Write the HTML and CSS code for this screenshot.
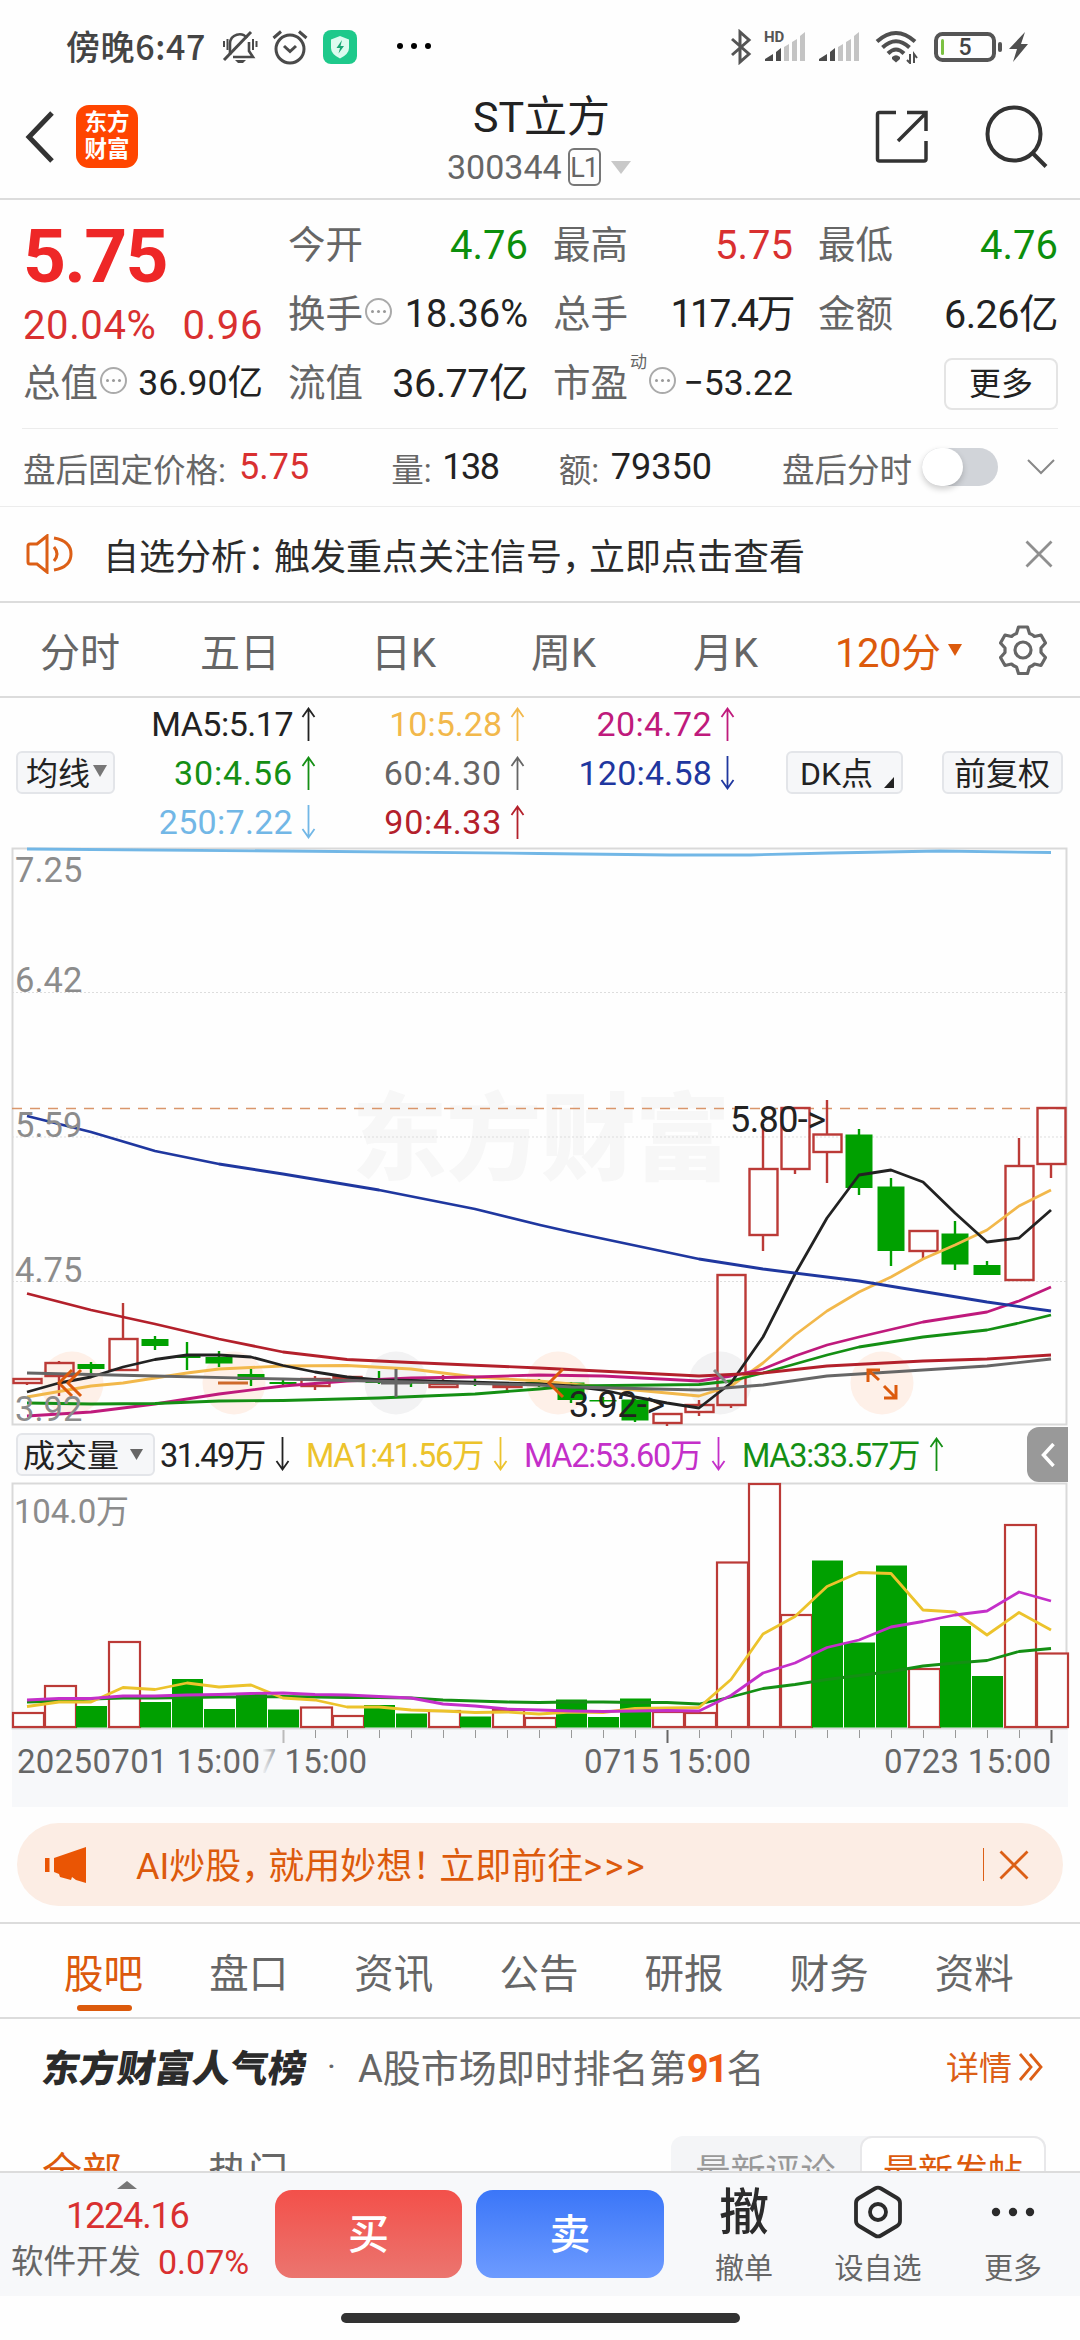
FILE: index.html
```html
<!DOCTYPE html>
<html lang="zh-CN">
<head>
    <meta charset="utf-8">
    <title>ST立方 300344</title>
    <link rel="stylesheet" href="styles.css">
</head>
<body>

<!-- status bar -->
<div class="status">
    <span class="status-time">傍晚6:47</span>
    <svg class="ic-bell" width="36" height="36" viewBox="0 0 36 36" fill="none" stroke="#4a4a4a" stroke-width="2.6">
        <path d="M8 26 V14 a9.500 9.500 0 0 1 17-5 M11 28 H31 L27 22 V13"/>
        <path d="M2 31 L29 3" stroke-width="3"/>
        <path d="M2 12v6M5.500 10v11M31 10v11M34.500 12v6" stroke-width="2"/>
        <path d="M13 31 h11 l-3 3 h-5z" fill="#4a4a4a" stroke="none"/>
    </svg>
    <svg class="ic-alarm" width="36" height="36" viewBox="0 0 36 36" fill="none" stroke="#4a4a4a" stroke-width="3">
        <circle cx="18" cy="20" r="14"/>
        <path d="M12 17 l6 5.500 6-5.500M1.500 9 L9 2.500M34.500 9 L27 2.500"/>
    </svg>
    <svg class="ic-shield" width="34" height="34" viewBox="0 0 34 34">
        <rect width="34" height="34" rx="8" fill="#1ec98b"/>
        <path d="M17 6 L26 9.500 V18 q0 6-9 10.500 q-9-4.500-9-10.500 V9.500z" fill="#dcfbef"/>
        <path d="M19 10 L13.500 18 h3.500 l-1.500 5.500 L21 16 h-3.500z" fill="#17a673"/>
    </svg>
    <svg class="ic-dots" width="36" height="8" viewBox="0 0 36 8"><circle cx="3" cy="4" r="3"/><circle cx="17" cy="4" r="3"/><circle cx="31" cy="4" r="3"/></svg>

    <svg class="ic-bt" width="22" height="36" viewBox="0 0 22 36" fill="none" stroke="#555" stroke-width="3">
        <path d="M2 10 L19 25 L10 33 V3 L19 11 L2 26"/>
    </svg>
    <svg class="ic-signal" width="42" height="34" viewBox="0 0 42 34">
        <path d="M0 31v-2l8-5v7zM11 31v-9l5-4v13z" fill="#4a4a4a"/>
        <path d="M19 31V17l5-3v17zM27 31V12l5-3v22zM35 31V6l5-4v29z" fill="#c4c4c4"/>
        <text x="-1" y="12" class="hd">HD</text>
    </svg>
    <svg class="ic-signal2" width="42" height="34" viewBox="0 0 42 34">
        <path d="M0 31v-2l8-5v7zM11 31v-9l5-4v13z" fill="#4a4a4a"/>
        <path d="M19 31V17l5-3v17zM27 31V12l5-3v22zM35 31V6l5-4v29z" fill="#c4c4c4"/>
    </svg>
    <svg class="ic-wifi" width="44" height="34" viewBox="0 0 44 34" fill="none" stroke="#4f4f4f" stroke-width="4">
        <path d="M2 11.500 Q21 -5.500 40 11.500M7.500 17.500 Q21 5 34.500 17.500M13 23.500 Q21 15.500 29 23.500"/>
        <path d="M17 27 q4-3.500 8 0 v2 l-4 3.500 -4-3.500z" fill="#4f4f4f" stroke="none"/>
        <path d="M35 24v9l-3-3M39 33v-9l3 4" stroke-width="2"/>
    </svg>
    <svg class="ic-battery" width="70" height="32" viewBox="0 0 70 32">
        <rect x="2" y="3" width="58" height="26" rx="6.500" fill="none" stroke="#555" stroke-width="4"/>
        <rect x="64" y="11" width="4" height="10" rx="2" fill="#555"/>
        <rect x="7" y="8" width="3" height="16" rx="1.500" fill="#7cc142"/>
        <text x="31" y="24" class="battery-num">5</text>
    </svg>
    <svg class="ic-bolt" width="20" height="30" viewBox="0 0 20 30"><path d="M16 0 L0 17 h8 L4 30 L19 12 h-7z" fill="#4f4f4f"/></svg>
</div>

<!-- header -->
<div class="header">
    <svg class="ic-back" width="30" height="52" viewBox="0 0 30 52" fill="none" stroke="#333" stroke-width="5"><path d="M27 2 L4 26 L27 50"/></svg>
    <div class="logo"><span>东方</span><span>财富</span></div>
    <div class="title">
        <h1>ST立方</h1>
        <div class="code">300344<span class="level">L1</span><svg width="20" height="13" viewBox="0 0 20 13"><path d="M0 0h20l-10 13z" fill="#c8c8c8"/></svg></div>
    </div>
    <svg class="ic-share" width="54" height="54" viewBox="0 0 54 54" fill="none" stroke="#333" stroke-width="3.500">
        <path d="M21 2.500 H4.500 q-2 0-2 2 V49 q0 2 2 2 H49 q2 0 2-2 V31M32 2.500 H51 V21M23 31 L51 3"/>
    </svg>
    <svg class="ic-search" width="64" height="64" viewBox="0 0 64 64" fill="none" stroke="#333" stroke-width="4">
        <circle cx="29" cy="29" r="26.500"/><path d="M47.500 48 L61 61.500"/>
    </svg>
</div>

<!-- quote -->
<div class="quote">
    <div class="price">
        <div class="last">5.75</div>
        <div class="change"><span>20.04%</span><span>0.96</span></div>
    </div>
    <div class="cell"><label>今开</label><b class="green">4.76</b></div>
    <div class="cell"><label>最高</label><b class="red">5.75</b></div>
    <div class="cell"><label>最低</label><b class="green">4.76</b></div>
    <div class="cell"><label>换手<i class="info"></i></label><b class="w-rate">18.36%</b></div>
    <div class="cell"><label>总手</label><b class="w-vol">117.4万</b></div>
    <div class="cell"><label>金额</label><b class="w-unit">6.26亿</b></div>
    <div class="cell"><label>总值<i class="info"></i></label><b class="small">36.90亿</b></div>
    <div class="cell"><label>流值</label><b class="w-unit">36.77亿</b></div>
    <div class="cell"><label>市盈<sup>动</sup><i class="info"></i></label><b class="small">−53.22</b></div>
    <div class="cell"><span class="more">更多</span></div>
</div>
<div class="after">
    <label class="a1">盘后固定价格:</label><b class="red">5.75</b>
    <label class="a2">量:</label><b class="qty">138</b>
    <label class="a3">额:</label><b>79350</b>
    <label class="a4">盘后分时</label><span class="toggle"></span>
    <svg width="28" height="16" viewBox="0 0 28 16" fill="none" stroke="#888" stroke-width="2"><path d="M1 1 L14 14 L27 1"/></svg>
</div>

<!-- notice -->
<div class="notice">
    <svg width="48" height="40" viewBox="0 0 48 40" fill="none" stroke="#dc5f16" stroke-width="3">
        <path d="M21 2 L11 10 H4 q-2 0-2 2 V28 q0 2 2 2 H11 L21 38zM28 13 q6 7 0 14M28 4 q17 3 17 16 t-17 16"/>
    </svg>
    <p>自选分析<i>：</i>触发重点关注信号<i>，</i>立即点击查看</p>
    <svg width="28" height="28" viewBox="0 0 28 28" fill="none" stroke="#8f8f8f" stroke-width="2.800"><path d="M1.500 1.500 L26.500 26.500M26.500 1.500 L1.500 26.500"/></svg>
</div>

<!-- period tabs -->
<div class="periods">
    <span>分时</span><span>五日</span><span>日K</span><span>周K</span><span>月K</span>
    <span class="on">120分<svg width="14" height="12" viewBox="0 0 14 12"><path d="M0 0h14l-7 12z" fill="#dc5a0c"/></svg></span>
    <svg class="gear" width="48" height="50" viewBox="0 0 48 50" fill="none" stroke="#666" stroke-width="3.200">
        <path d="M19.500 2 h9 l2 6.500 q3 1 5 3 l6.500-1.500 4.500 8 -4.500 5 v4.500 l4.500 5 -4.500 8 -6.500-1.500 q-2 2-5 3 l-2 6.500 h-9 l-2-6.500 q-3-1-5-3 l-6.500 1.500 -4.500-8 4.500-5 v-4.500 l-4.500-5 4.500-8 6.500 1.500 q2-2 5-3z" stroke-linejoin="round"/>
        <circle cx="24" cy="25" r="8"/>
    </svg>
</div>

<svg width="0" height="0" class="defs">
    <symbol id="up" viewBox="0 0 15 34"><path d="M7.500 34V2M1.500 10 L7.500 1.500 L13.500 10" fill="none" stroke="currentColor" stroke-width="1.800"/></symbol>
    <symbol id="down" viewBox="0 0 15 34"><path d="M7.500 0V32M1.500 24 L7.500 32.500 L13.500 24" fill="none" stroke="currentColor" stroke-width="1.800"/></symbol>
</svg>

<!-- moving averages -->
<div class="averages">
    <span class="btn btn-ma">均线<svg width="14" height="12" viewBox="0 0 14 12"><path d="M0 0h14l-7 12z" fill="#777"/></svg></span>
    <div class="ma-grid">
        <span class="c5">MA5:5.17<svg><use href="#up"/></svg></span>
        <span class="c10">10:5.28<svg><use href="#up"/></svg></span>
        <span class="c20">20:4.72<svg><use href="#up"/></svg></span>
        <span class="c30">30:4.56<svg><use href="#up"/></svg></span>
        <span class="c60">60:4.30<svg><use href="#up"/></svg></span>
        <span class="c120">120:4.58<svg><use href="#down"/></svg></span>
        <span class="c250">250:7.22<svg><use href="#down"/></svg></span>
        <span class="c90">90:4.33<svg><use href="#up"/></svg></span>
    </div>
    <span class="btn btn-dk">DK点<svg width="10" height="11" viewBox="0 0 10 11"><path d="M10 0v11H0z" fill="#222"/></svg></span>
    <span class="btn btn-fq">前复权</span>
</div>

<!-- candles -->
<svg class="kline" width="1080" height="580" viewBox="0 848 1080 580">
    <text class="watermark" x="352" y="1174" textLength="378">东方财富</text>
    <path class="grid" d="M12 993.500H1067M12 1138H1067M12 1282.500H1067"/>
    <rect class="frame" x="12.500" y="849.500" width="1054" height="576"/>
    <g id="events"></g>
    <path d="M12 1109.500H1067" stroke="#d9966b" stroke-width="1.500" stroke-dasharray="10 8"/>
    <g id="candles"></g>
    <g id="averages"></g>
    <g class="event-icons">
        <path d="M72 1371 L59 1384 L72 1397M81 1371 L68 1384 L81 1397" stroke="#dc5a0c"/>
        <path d="M218 1384H248" stroke="#cf6a2c"/>
        <path d="M381 1384H411M396 1370V1398" stroke="#666"/>
        <path d="M563 1370 L549 1384 L563 1398" stroke="#dc5a0c"/>
        <path d="M714 1371 L727 1384" stroke="#888"/>
        <path d="M879 1381 L868 1371M868 1383V1371H880M884 1387 L896 1399M896 1386V1399H884" stroke="#dc5a0c" stroke-width="3.500"/>
    </g>
    <g class="axis">
        <text x="15" y="883">7.25</text>
        <text x="15" y="993">6.42</text>
        <text x="15" y="1138">5.59</text>
        <text x="15" y="1283">4.75</text>
        <text x="15" y="1422">3.92</text>
    </g>
    <text class="mark" x="730" y="1133" textLength="96">5.80-&gt;</text>
    <text class="mark" x="569" y="1418" textLength="96">3.92-&gt;</text>
</svg>

<!-- volume -->
<div class="vol-head">
    <span class="btn btn-vol">成交量<svg width="13" height="11" viewBox="0 0 13 11"><path d="M0 0h13l-6.500 11z" fill="#666"/></svg></span>
    <span class="v0">31.49万<svg><use href="#down"/></svg></span>
    <span class="v1">MA1:41.56万<svg><use href="#down"/></svg></span>
    <span class="v2">MA2:53.60万<svg><use href="#down"/></svg></span>
    <span class="v3">MA3:33.57万<svg><use href="#up"/></svg></span>
    <span class="side"><svg width="14" height="24" viewBox="0 0 14 24" fill="none" stroke="#fff" stroke-width="3.500"><path d="M12.500 1 L2.500 12 L12.500 23"/></svg></span>
</div>
<svg class="volume" width="1080" height="325" viewBox="0 1483 1080 325">
    <defs>
        <linearGradient id="fade"><stop offset="0" stop-color="#f7f8fa"/><stop offset="1" stop-color="#f7f8fa" stop-opacity="0"/></linearGradient>
    </defs>
    <rect x="12" y="1730" width="1056" height="78" fill="#f7f8fa"/>
    <rect class="frame" x="12.500" y="1484.500" width="1054" height="245"/>
    <text class="vol-max" x="14" y="1524" textLength="115">104.0万</text>
    <g id="bars"></g>
    <g id="vol-averages"></g>
    <g id="ticks"></g>
    <g class="dates">
        <text x="202" y="1774" textLength="165">0707 15:00</text>
        <rect x="196" y="1745" width="67" height="36" fill="#f7f8fa"/>
        <rect x="262" y="1745" width="22" height="36" fill="url(#fade)"/>
        <text x="17" y="1774" textLength="243">20250701 15:00</text>
        <text x="584" y="1774" textLength="167">0715 15:00</text>
        <text x="884" y="1774" textLength="167">0723 15:00</text>
    </g>
</svg>

<!-- promo -->
<div class="promo">
    <svg class="horn" width="42" height="38" viewBox="0 0 42 38" fill="#ea5504"><path d="M0 12h4.500v14H0zM9 12 L41 1V37L31 34 27 31 26 34 15 31 14 28 9 26z"/></svg>
    <p>AI炒股<i>，</i>就用妙想<i>！</i>立即前往<em>&gt;&gt;&gt;</em></p>
    <span class="bar"></span>
    <svg width="30" height="30" viewBox="0 0 30 30" fill="none" stroke="#dc5f16" stroke-width="2.800"><path d="M1.500 1.500 L28.500 28.500M28.500 1.500 L1.500 28.500"/></svg>
</div>

<div class="sections">
    <span class="on">股吧</span><span>盘口</span><span>资讯</span><span>公告</span><span>研报</span><span>财务</span><span>资料</span>
</div>

<div class="rank">
    <strong>东方财富人气榜</strong><em>·</em>
    <p>A股市场即时排名第<b>91</b>名</p>
    <a>详情<svg width="26" height="28" viewBox="0 0 26 28" fill="none" stroke="#dc5f16" stroke-width="2.800"><path d="M2 1 L13 14 L2 27M12 1 L23 14 L12 27"/></svg></a>
</div>

<div class="filter">
    <div class="filter-in">
        <span class="all">全部</span><span class="hot">热门</span>
        <div class="seg"><span>最新评论</span><span class="on">最新发帖</span></div>
    </div>
</div>

<!-- bottom bar -->
<div class="bottom">
    <div class="index">
        <svg width="20" height="8" viewBox="0 0 20 8"><path d="M10 0 L20 8H0z" fill="#777"/></svg>
        <div class="point">1224.16</div>
        <div class="board"><span>软件开发</span><b>0.07%</b></div>
    </div>
    <div class="trade buy">买</div>
    <div class="trade sell">卖</div>
    <div class="tool t1"><span class="big">撤</span><span>撤单</span></div>
    <div class="tool t2">
        <span class="big"><svg width="48" height="54" viewBox="0 0 48 54" fill="none" stroke="#2b2b2b" stroke-width="3.800"><path d="M21 3.500 q3-1.800 6 0 L43 13 q3 1.800 3 5 V36 q0 3.200-3 5 L27 50.500 q-3 1.800-6 0 L5 41 q-3-1.800-3-5 V18 q0-3.200 3-5z"/><circle cx="24" cy="27" r="8"/></svg></span>
        <span>设自选</span>
    </div>
    <div class="tool t3">
        <span class="big"><svg width="44" height="10" viewBox="0 0 44 10" fill="#2b2b2b"><circle cx="5" cy="5" r="4.200"/><circle cx="22" cy="5" r="4.200"/><circle cx="39" cy="5" r="4.200"/></svg></span>
        <span>更多</span>
    </div>
</div>
<div class="home"><span></span></div>

<script src="chart.js"></script>
</body>
</html>
```

FILE: styles.css
```css
* {
    box-sizing: border-box;
    margin: 0;
    padding: 0;
}

body {
    width: 1080px;
    height: 2340px;
    overflow: hidden;
    background: #fefefe;
    color: #222;
    font-family: Roboto, "Noto Sans CJK SC", sans-serif;
}

svg { display: block; flex: none; }
i, em { font-style: normal; }
b { font-weight: normal; }
.defs { position: absolute; }

/* status bar */
.status {
    display: flex;
    align-items: center;
    height: 72px;
    padding: 22px 0 0 66px;
    white-space: nowrap;
}
.status-time {
    width: 156px;
    font: 500 34px/46px "Noto Sans CJK SC", sans-serif;
    letter-spacing: 0.6px;
    color: #444;
    padding-bottom: 3px;
}
.ic-alarm { margin-left: 14px; }
.ic-shield { margin-left: 15px; }
.ic-dots { margin-left: 40px; margin-top: -2px; }
.ic-bt { margin-left: 297px; }
.ic-signal { margin-left: 13px; overflow: visible; }
.ic-signal2 { margin-left: 12px; }
.ic-wifi { margin-left: 14px; }
.ic-battery { margin-left: 15px; }
.ic-bolt { margin-left: 5px; }
.hd { font: bold 15px Roboto; fill: #555; stroke: #fefefe; stroke-width: 2px; paint-order: stroke; }
.battery-num { font: 500 23px Roboto; fill: #444; text-anchor: middle; }

/* header */
.header {
    display: flex;
    height: 128px;
    padding-left: 25px;
    border-bottom: 2px solid #dcdcdc;
}
.ic-back { margin-top: 39px; }
.logo {
    width: 62px;
    height: 63px;
    margin: 33px 0 0 21px;
    padding-top: 4px;
    border-radius: 13px;
    background: #ff4500;
    color: #fff;
    font-size: 22.5px;
    font-weight: bold;
    line-height: 27px;
    text-align: center;
}
.logo span { display: block; }
.title {
    width: 300px;
    margin-left: 255px;
}
.title h1 {
    width: 297px;
    font: normal 43px/56px Roboto, "Noto Sans CJK SC", sans-serif;
    padding-top: 17px;
    text-align: center;
    height: 74px;
}
.code {
    display: flex;
    align-items: center;
    height: 42px;
    padding-left: 54px;
    font-size: 34px;
    color: #666;
}
.level {
    width: 33px;
    height: 38px;
    margin: 0 10px 0 6px;
    border: 2px solid #777;
    border-radius: 6px;
    font-size: 27px;
    line-height: 36px;
    text-align: center;
    letter-spacing: -1px;
}
.ic-share { margin: 38px 0 0 182px; }
.ic-search { margin: 33px 0 0 56px; }

/* quote */
.quote {
    display: grid;
    grid-template-columns: repeat(4, 240px);
    grid-template-rows: repeat(3, 69px);
    column-gap: 25px;
    margin: 11px 22px 0;
    padding: 0 0 0 1px;
    height: 217px;
}
.price { grid-row: span 2; color: #d93030; }
.last {
    height: 86px;
    font-size: 75px;
    font-weight: bold;
    line-height: 91px;
    color: #ee2727;
    letter-spacing: -1.8px;
}
.change {
    display: flex;
    justify-content: space-between;
    font-size: 40px;
    line-height: 58px;
    height: 52px;
    letter-spacing: 0.6px;
}
.cell {
    display: flex;
    align-items: center;
    justify-content: space-between;
    line-height: 69px;
    white-space: nowrap;
}
.cell label {
    display: flex;
    align-items: center;
    font-size: 37.5px;
    color: #666;
}
.cell b { font-size: 40px; }
.cell b.small { font-size: 35.5px; }
.cell b.w-rate { font-size: 38px; }
.cell b.w-vol { font-size: 39px; letter-spacing: -2.4px; }
.cell b.w-unit { font-size: 39.5px; letter-spacing: -0.5px; }
.cell sup { font-size: 17px; align-self: flex-start; line-height: 26px; margin-left: 2px; }
.info {
    position: relative;
    width: 27px;
    height: 27px;
    margin: -6px 0 0 2px;
    border: 2px solid #aaa;
    border-radius: 50%;
}
.info::after {
    content: "";
    position: absolute;
    left: 4px;
    top: 10px;
    width: 3px;
    height: 3px;
    border-radius: 50%;
    background: #999;
    box-shadow: 6px 0 #999, 12px 0 #999;
}
.red, .cell .red { color: #d93030; }
.green, .cell .green { color: #0c8f0c; }
.more {
    width: 114px;
    height: 52px;
    margin-left: auto;
    border: 2px solid #e4e4e4;
    border-radius: 8px;
    font-size: 32px;
    line-height: 48px;
    text-align: center;
}
.after {
    display: flex;
    align-items: center;
    height: 79px;
    padding: 0 25px 0 23px;
    border-bottom: 1px solid #ececec;
    background: linear-gradient(#ececec, #ececec) 22px 0 / 1036px 1px no-repeat;
    font-size: 36px;
    white-space: nowrap;
}
.after label { font-size: 32.5px; color: #666; flex: none; }
.after .a1 { width: 216px; }
.after .a2 { width: 51px; margin-left: 82px; }
.after .a3 { width: 52px; margin-left: 60px; }
.after .a4 { width: 130px; margin-left: auto; }
.after .qty { letter-spacing: -1.4px; }
.toggle {
    width: 76px;
    height: 38px;
    margin: 0 29px 0 10px;
    border-radius: 19px;
    background: #d1d4d9;
}
.toggle::after {
    content: "";
    display: block;
    width: 41px;
    height: 38px;
    border-radius: 19px;
    background: #fff;
    box-shadow: 0 3px 6px rgba(0, 0, 0, .2);
}

/* notice */
.notice {
    display: flex;
    align-items: center;
    height: 96px;
    padding: 0 27px 0 26px;
    border-bottom: 2px solid #dcdcdc;
}
.notice p { flex: 1; margin-left: 29px; font-size: 36px; color: #2b2b2b; white-space: nowrap; }
.notice i { letter-spacing: -9px; }

/* period tabs */
.periods {
    display: flex;
    align-items: center;
    height: 95px;
    padding-left: 40px;
    border-bottom: 2px solid #dcdcdc;
    font-size: 40px;
    color: #666;
    white-space: nowrap;
}
.periods span { width: 160px; }
.periods span:nth-child(2) { width: 171px; }
.periods span:nth-child(3) { width: 160px; }
.periods span:nth-child(4) { width: 162px; }
.periods span:nth-child(5) { width: 142px; }
.periods .on { display: flex; align-items: center; width: 164px; color: #dc5a0c; letter-spacing: -0.5px; }
.periods .on svg { margin-left: 8px; }

/* moving averages */
.averages {
    display: flex;
    align-items: center;
    height: 149px;
    padding-left: 16px;
}
.btn {
    display: flex;
    align-items: center;
    height: 43px;
    padding-bottom: 3px;
    border: 2px solid #e3e5e9;
    border-radius: 6px;
    background: #f6f7f9;
    color: #222;
    font-size: 32px;
    white-space: nowrap;
    flex: none;
}
.btn-ma { width: 99px; padding-left: 8px; }
.btn-ma svg { margin-left: 3px; }
.btn-dk { width: 117px; margin-left: 51px; padding-left: 12px; }
.btn-dk svg { margin: 22px 0 0 11px; }
.btn-fq { width: 121px; margin-left: 39px; padding-left: 10px; }
.ma-grid {
    display: grid;
    grid-template: repeat(3, 49px) / 201px 209px 210px;
    font-size: 34px;
}
.ma-grid span { display: flex; align-items: center; justify-content: flex-end; }
.ma-grid svg { width: 15px; height: 34px; margin-left: 8px; }
.c5 { color: #222; letter-spacing: -0.5px; }
.c10 { color: #f2b84b; }
.c20 { color: #bf1a7c; letter-spacing: 0.4px; }
.c30 { color: #148f14; letter-spacing: 0.9px; }
.c60 { color: #666; letter-spacing: 0.8px; }
.c120 { color: #1f379f; letter-spacing: 0.2px; }
.c250 { color: #72b7e6; letter-spacing: 0.3px; }
.c90 { color: #b3202b; letter-spacing: 0.7px; }

/* candles */
.frame { fill: none; stroke: #d9d9d9; stroke-width: 2; }
.grid { stroke: #ddd; stroke-dasharray: 2 2; }
.watermark { font: 900 95px "Noto Sans CJK SC", sans-serif; fill: #f7f7f7; }
.axis { font-size: 34.5px; fill: #8c8c8c; }
.mark { font-size: 36px; fill: #222; }
.event-icons path { fill: none; stroke-width: 3; }
.line { fill: none; stroke-width: 2.8; stroke-linejoin: round; }

/* volume */
.vol-head {
    position: relative;
    display: flex;
    align-items: center;
    height: 55px;
    padding-left: 16px;
    font-size: 32.5px;
    letter-spacing: -1.3px;
    white-space: nowrap;
}
.vol-head > span { display: flex; align-items: center; flex: none; }
.vol-head > span:not(.side) { padding-bottom: 4px; }
.vol-head > .btn-vol { width: 139px; padding-left: 5px; font-size: 32px; letter-spacing: 0; }
.btn-vol svg { margin: 3px 0 0 11px; }
.vol-head span:not(.btn):not(.side) svg { width: 15px; height: 34px; margin: 3px 0 0 10px; }
.v0 { width: 151px; padding-left: 5px; color: #222; letter-spacing: -1.6px; }
.v1 { width: 218px; color: #ecc32c; }
.v2 { width: 218px; color: #c42fc9; }
.v3 { color: #148f14; }
.side {
    position: absolute;
    right: 12px;
    top: 0;
    width: 41px;
    height: 55px;
    padding-left: 14px;
    border-radius: 12px 0 0 12px;
    background: #999;
}
.vol-max { font-size: 33px; fill: #8c8c8c; }
.dates { font-size: 33px; fill: #666; }

/* promo */
.promo {
    display: flex;
    align-items: center;
    height: 83px;
    margin: 16px 17px;
    padding: 0 34px 0 28px;
    border-radius: 42px;
    background: #fcede4;
    color: #dc5a0c;
    font-size: 36px;
    white-space: nowrap;
}
.promo p { flex: 1; margin-left: 49px; padding-bottom: 4px; }
.promo i { letter-spacing: -9px; }
.promo em { letter-spacing: 2.4px; }
.bar { width: 1px; height: 33px; margin-right: 15px; background: #dc5f16; }

/* sections */
.sections {
    display: flex;
    height: 97px;
    padding-left: 64px;
    border-top: 2px solid #dcdcdc;
    border-bottom: 2px solid #dcdcdc;
    font-size: 39.5px;
    line-height: 101px;
    color: #666;
}
.sections span { width: 145.7px; }
.sections .on { position: relative; color: #dc5a0c; }
.sections .on::after {
    content: "";
    position: absolute;
    left: 13px;
    bottom: 6px;
    width: 55px;
    height: 6px;
    border-radius: 3px;
    background: #dc5a0c;
}

.rank {
    display: flex;
    align-items: center;
    height: 99px;
    padding: 0 36px 6px 43px;
    color: #666;
    white-space: nowrap;
}
.rank strong { width: 266px; font-size: 37.7px; font-weight: 900; color: #2b2b2b; transform: skewX(-9deg); }
.rank em { width: 49px; padding-left: 18px; font-size: 34px; }
.rank p { flex: 1; font-size: 38px; }
.rank p b { font-weight: bold; color: #f05a10; letter-spacing: -2px; }
.rank a { display: flex; align-items: center; font-size: 33px; color: #dc5f16; }
.rank a svg { margin: 3px 0 0 6px; }

.filter { height: 35px; margin-top: 18px; overflow: hidden; }
.filter-in { display: flex; align-items: flex-start; height: 35px; padding-left: 42px; font-size: 40px; line-height: 74px; color: #666; }
.filter .all { width: 166px; color: #dc5a0c; }
.seg {
    display: flex;
    height: 78px;
    width: 375px;
    margin-left: auto;
    margin-right: 34px;
    border-radius: 12px;
    background: #f4f5f7;
    font-size: 35px;
    color: #999;
}
.seg span { width: 189px; text-align: center; }
.seg .on { width: 186px; border: 2px solid #e8e8ea; border-radius: 12px; background: #fff; color: #dc5a0c; line-height: 70px; }

/* bottom bar */
.bottom {
    display: flex;
    height: 125px;
    border-top: 2px solid #dcdcdc;
    background: #f7f8fa;
    white-space: nowrap;
}
.index { width: 275px; padding-top: 8px; color: #d93030; }
.index svg { margin-left: 117px; }
.point { padding-left: 66px; font-size: 36px; line-height: 54px; letter-spacing: -1.2px; }
.board { display: flex; padding-left: 11px; font-size: 32.5px; line-height: 38px; color: #666; }
.board span { width: 147px; }
.board b { font-size: 34px; color: #d93030; }
.trade {
    width: 187px;
    height: 88px;
    margin: 17px 14px 0 0;
    border-radius: 17px;
    color: #fff;
    font-size: 41px;
    font-weight: 500;
    line-height: 91px;
    text-align: center;
}
.buy { background: linear-gradient(#f3504a, #eb756f); }
.sell { width: 188px; background: linear-gradient(#3b76f8, #6d9bff); margin-right: 42px; }
.tool { display: flex; flex-direction: column; align-items: center; font-size: 29px; color: #666; line-height: 38px; }
.tool .big { display: flex; align-items: center; justify-content: center; height: 77px; font-size: 50px; font-weight: 500; color: #2b2b2b; }
.t1 { width: 76px; }
.t1 .big { padding-top: 3px; }
.t2 { width: 100px; margin-left: 46px; }
.t3 { width: 70px; margin-left: 50px; }

.home { height: 44px; padding-top: 17px; background: #fefefe; }
.home span { display: block; width: 399px; height: 10px; margin: 0 auto; border-radius: 5px; background: #323232; }
```

FILE: chart.js
```javascript
var STEP = 32, FIRST = 27;
var RED = '#bb3a37', GREEN = '#00a000';

function x(i) { return FIRST + STEP * i; }

// [direction, body top, body bottom, wick top, wick bottom]
var candles = [
    ['r', 1380, 1384, 1379, 1386], ['r', 1364, 1377, 1362, 1397], ['g', 1365, 1370, 1363, 1376],
    ['r', 1340, 1371, 1304, 1372], ['g', 1340, 1347, 1337, 1351], ['g', 1357, 1359, 1343, 1371],
    ['g', 1358, 1364.5, 1352, 1368], ['g', 1375, 1381, 1370, 1387], ['g', 1383, 1385, 1380, 1388],
    ['r', 1380, 1387, 1377, 1391], ['r', 1378, 1380, 1378, 1380], ['g', 1383, 1384, 1372, 1385],
    ['g', 1383, 1384.5, 1380, 1388], ['r', 1385, 1388, 1376, 1388], ['g', 1383, 1384.5, 1378, 1387],
    ['r', 1386, 1388, 1385, 1391], ['g', 1383, 1384.5, 1380, 1388], ['g', 1383.5, 1401, 1383, 1404],
    ['g', 1401, 1402.5, 1398, 1405], ['g', 1400.5, 1421.5, 1400, 1423], ['r', 1415, 1424, 1415, 1427],
    ['r', 1406, 1413, 1401, 1417], ['r', 1276, 1406, 1276, 1409], ['r', 1170, 1236, 1125, 1252],
    ['r', 1109, 1170, 1109, 1175], ['r', 1135.5, 1153, 1101, 1184], ['g', 1135.5, 1189, 1130, 1196],
    ['g', 1187.500, 1252, 1179, 1267], ['r', 1232, 1252, 1231, 1260], ['g', 1234.5, 1265.5, 1222, 1271],
    ['g', 1266, 1276, 1262, 1276], ['r', 1167, 1281, 1139, 1281], ['r', 1109, 1165, 1109, 1179]
];

var averages = {
    '#f2b84b': '27,1398 91,1387 123,1384 187,1374 219,1370 283,1367 347,1366.5 411,1370 475,1378 539,1382 603,1388 699,1397 731,1387 763,1364 795,1336 827,1312 859,1293 891,1278 923,1260 955,1246 987,1231 1019,1207 1051,1191',
    '#bf1a7c': '27,1417 91,1413 155,1405 219,1395 283,1387 347,1382 411,1379 475,1378 539,1376 603,1377 699,1382 731,1377 763,1370 795,1357 827,1346 859,1338 923,1323 987,1313 1019,1302 1051,1288',
    '#148f14': '27,1404 91,1405 155,1404.5 219,1402 283,1401.5 379,1399 475,1395 539,1390 571,1387 699,1385.5 731,1382 763,1374 795,1365 827,1356 859,1348 923,1338 987,1331 1019,1324 1051,1316',
    '#222': '27,1393 59,1384 91,1378 123,1368 155,1360.5 187,1356 219,1356 251,1358 283,1366.5 315,1373 347,1378 379,1381 411,1381.5 539,1385 571,1387 603,1391 635,1398 667,1404 699,1409 731,1384 763,1338 795,1275 827,1219 859,1176 891,1171 923,1183 955,1214 987,1243 1019,1239 1051,1211',
    '#666': '27,1374 155,1377 283,1380 411,1383 539,1386 571,1388 699,1391 763,1386 827,1377 891,1373 987,1367 1051,1360',
    '#b3202b': '27,1294.5 91,1311 155,1325 219,1340 283,1353 347,1360.5 411,1363.5 539,1369 699,1377 763,1374 827,1367 923,1362 987,1360 1051,1356',
    '#1f379f': '27,1117 91,1133 155,1152 219,1165 283,1175 379,1191 475,1210 540,1226 571,1233 699,1260 763,1270 859,1282 987,1303 1051,1312',
    '#72b7e6': '27,850 283,852 539,854.5 670,856 750,856 830,854 940,852 1051,853.5'
};

var events = [[72, 1], [234, 1], [396, 0], [558, 1], [720, 0], [882, 1]];

var volumes = [
    ['r', 1714], ['r', 1687], ['g', 1707], ['r', 1643], ['g', 1703], ['g', 1680], ['g', 1710], ['g', 1695],
    ['g', 1710.5], ['r', 1708.5], ['r', 1717], ['g', 1706], ['g', 1714.5], ['r', 1712], ['g', 1717.5],
    ['r', 1711], ['r', 1719], ['g', 1700.5], ['g', 1718], ['g', 1699.5], ['r', 1713], ['r', 1714],
    ['r', 1563.5], ['r', 1485], ['r', 1616], ['g', 1561.5], ['g', 1643.5], ['g', 1566.5], ['r', 1670],
    ['g', 1627], ['g', 1677], ['r', 1526], ['r', 1654.5]
];

var volAverages = {
    '#148f14': [1703, 1702, 1700, 1699, 1699, 1698.5, 1698, 1698, 1697.5, 1698, 1698.5, 1698.5, 1699, 1701, 1702, 1703, 1703.5, 1703, 1703, 1703.5, 1703.5, 1705, 1698, 1689.5, 1685.5, 1680.5, 1676.5, 1672.5, 1667, 1664, 1661.5, 1652.5, 1649.5],
    '#ecc32c': [1707.5, 1703, 1703, 1688.5, 1690.5, 1684, 1688, 1686, 1699, 1701, 1708, 1708, 1711, 1712, 1713.5, 1713, 1715, 1713, 1713.5, 1709.5, 1709, 1708.5, 1680.5, 1635, 1617.5, 1587.5, 1573.5, 1574.5, 1611, 1613, 1636, 1613.5, 1631],
    '#c42fc9': [1701, 1699.5, 1699.5, 1697, 1697, 1696, 1695.5, 1694.5, 1694, 1695.5, 1696, 1697.5, 1699, 1705, 1707, 1710, 1711, 1712, 1712.5, 1712, 1711.5, 1712, 1696.5, 1674, 1664, 1648.5, 1641, 1628, 1622.5, 1616, 1612, 1593, 1602]
};

function put(id, html) { document.getElementById(id).innerHTML = html.join(''); }

function rect(left, top, w, h, attrs) {
    return '<rect x="' + left + '" y="' + top + '" width="' + w + '" height="' + h + '" ' + attrs + '/>';
}

function vline(cx, top, bottom, color, w) {
    return '<path d="M' + cx + ' ' + top + 'V' + bottom + '" stroke="' + color + '" stroke-width="' + w + '"/>';
}

function line(points, color) {
    return '<polyline class="line" points="' + points + '" stroke="' + color + '"/>';
}

put('events', events.map(function (e) {
    return '<circle cx="' + e[0] + '" cy="1384" r="31.5" fill="' + (e[1] ? '#fef0e8' : '#f2f2f3') + '"/>';
}));

put('candles', candles.map(function (c, i) {
    var cx = x(i);
    if (c[0] === 'g') {
        return vline(cx, c[3], c[4], GREEN, 2.4) + rect(cx - 13.5, c[1], 27, c[2] - c[1], 'fill="' + GREEN + '"');
    }
    return vline(cx, c[3], c[1], RED, 2.4) + vline(cx, c[2], c[4], RED, 2.4) +
        rect(cx - 13.5, c[1], 28, c[2] - c[1], 'fill="none" stroke="' + RED + '" stroke-width="2.4"');
}));

put('averages', Object.keys(averages).map(function (color) {
    return line(averages[color], color);
}));

put('bars', volumes.map(function (v, i) {
    var left = x(i) - 14;
    if (v[0] === 'g') {
        return rect(left - 1, v[1], 31, 1728.5 - v[1], 'fill="' + GREEN + '"');
    }
    return rect(left, v[1], 31, 1728 - v[1], 'fill="#fefefe" stroke="' + RED + '" stroke-width="2.2"');
}));

put('vol-averages', Object.keys(volAverages).map(function (color) {
    return line(volAverages[color].map(function (y, i) { return x(i) + ',' + y; }).join(' '), color);
}));

// every 12th tick is a long one
var ticks = [];
for (var i = 8; i <= 32; i++) {
    var major = (i - 8) % 12 === 0;
    ticks.push(vline(x(i) + 0.5, 1731, major ? 1744 : 1739, major ? (i === 8 ? '#bbb' : '#666') : '#999', major ? 2 : 1));
}
put('ticks', ticks);
```
